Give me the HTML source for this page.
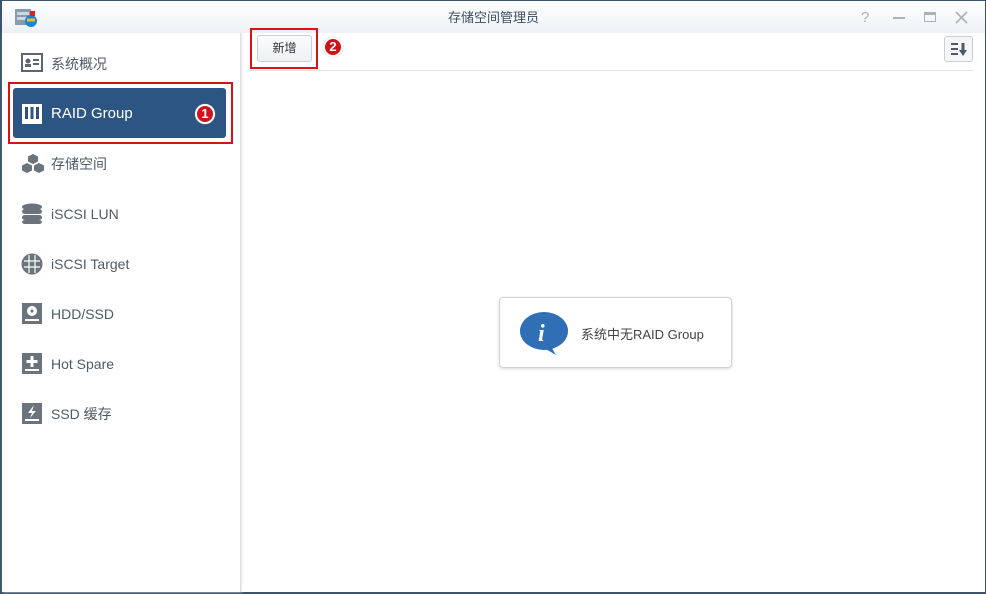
<!DOCTYPE html>
<html><head><meta charset="utf-8"><style>
*{margin:0;padding:0;box-sizing:border-box}
body{width:986px;height:594px;overflow:hidden;font-family:"Liberation Sans","Noto Sans CJK SC",sans-serif;background:#fff;position:relative}
.win{position:absolute;left:0;top:0;width:986px;height:594px;border:1px solid #3a5470;border-left-width:2px;border-bottom-width:2px;background:#fff}
.title{position:absolute;left:0;top:0;width:100%;height:32px;background:linear-gradient(#fff,#eef1f4);text-align:center;font-size:13px;color:#3b4d63;line-height:34px}
.side{position:absolute;left:0;top:32px;width:239px;bottom:0;background:#fff;border-right:1px solid #dcdfe3;box-shadow:1px 0 2px #e6e6e6}
.item{position:absolute;left:18px;font-size:14px;color:#505a64;height:24px;line-height:24px;padding-left:31px}
.item svg{position:absolute;left:1px;top:1px}
.sel{position:absolute;left:11px;top:55px;width:213px;height:50px;background:#2d5583;border-radius:3px}
.red{position:absolute;border:2px solid #d9121a}
.badge{position:absolute;width:20px;height:20px;border-radius:50%;background:#d0131a;border:2px solid #fff;box-shadow:0 0 1px #999;color:#fff;font-size:13px;font-weight:bold;text-align:center;line-height:16px}
</style></head><body>
<div class="win">
<div class="title">存储空间管理员
<svg style="position:absolute;left:12px;top:6px" width="24" height="22"><rect x="1" y="2" width="16" height="16" fill="#8a9bb0"/><rect x="3" y="5" width="12" height="3" fill="#cfd8e2"/><rect x="3" y="10" width="12" height="3" fill="#cfd8e2"/><circle cx="17" cy="14" r="6" fill="#1c84d6"/><path d="M13 13h8" stroke="#f0c020" stroke-width="3"/><rect x="16" y="4" width="5" height="5" fill="#d22"/></svg>
<span style="position:absolute;left:859px;top:0;color:#aab2ba;font-size:15px">?</span>
<span style="position:absolute;left:891px;top:16px;width:12px;height:1.5px;background:#aab2ba"></span>
<span style="position:absolute;left:922px;top:11px;width:12px;height:10px;border:1.5px solid #aab2ba;border-top-width:3px"></span>
<svg style="position:absolute;left:953px;top:10px" width="13" height="13"><path d="M1 1L12 12M12 1L1 12" stroke="#aab2ba" stroke-width="1.6"/></svg>
</div>
<div class="side">
<div class="sel"></div>
<div class="item" style="top:19px"><svg width="22" height="20"><rect x="1" y="1" width="20" height="17" fill="none" stroke="#5d6670" stroke-width="2"/><circle cx="7" cy="8" r="2.5" fill="#5d6670"/><rect x="4" y="11" width="6" height="3" fill="#5d6670"/><rect x="12" y="6" width="6" height="2" fill="#5d6670"/><rect x="12" y="10" width="6" height="2" fill="#5d6670"/></svg>系统概况</div>
<div class="item" style="top:69px;color:#fff;font-size:15px"><svg width="22" height="22"><rect x="1" y="1" width="20" height="20" fill="#fff"/><rect x="4" y="4" width="3" height="12" fill="#2d5583"/><rect x="9.5" y="4" width="3" height="12" fill="#2d5583"/><rect x="15" y="4" width="3" height="12" fill="#2d5583"/></svg>RAID Group</div>
<div class="item" style="top:119px"><svg width="24" height="22"><path d="M12 1l5 2.5v5l-5 2.5-5-2.5v-5zM6 10l5 2.5v5l-5 2.5-5-2.5v-5zM18 10l5 2.5v5l-5 2.5-5-2.5v-5z" fill="#6b737c"/></svg>存储空间</div>
<div class="item" style="top:169px"><svg width="22" height="22"><ellipse cx="11" cy="4" rx="10" ry="3.5" fill="#6b737c"/><rect x="1" y="6" width="20" height="5" rx="3" fill="#6b737c"/><rect x="1" y="12" width="20" height="5" rx="3" fill="#6b737c"/><rect x="1" y="17" width="20" height="4" rx="3" fill="#6b737c"/></svg>iSCSI LUN</div>
<div class="item" style="top:219px"><svg width="22" height="22"><circle cx="11" cy="11" r="10.5" fill="#6b737c"/><path d="M3 8h16M3 14h16M8 2v18M14 2v18" stroke="#fff" stroke-width="1.2"/></svg>iSCSI Target</div>
<div class="item" style="top:269px"><svg width="22" height="22"><rect x="1" y="0" width="20" height="21" fill="#6b737c"/><circle cx="11" cy="8" r="5" fill="#fff"/><circle cx="11" cy="8" r="1.5" fill="#6b737c"/><rect x="4" y="16" width="14" height="2" fill="#fff"/></svg>HDD/SSD</div>
<div class="item" style="top:319px"><svg width="22" height="22"><rect x="1" y="0" width="20" height="21" fill="#6b737c"/><path d="M11 3v11M5.5 8.5h11" stroke="#fff" stroke-width="3"/><rect x="4" y="16" width="14" height="2" fill="#fff"/></svg>Hot Spare</div>
<div class="item" style="top:369px"><svg width="22" height="22"><rect x="1" y="0" width="20" height="21" fill="#6b737c"/><path d="M13 2L7 10h4l-2 5 6-7h-4z" fill="#fff"/><rect x="4" y="16" width="14" height="2" fill="#fff"/></svg>SSD 缓存</div>
</div>
<div class="red" style="left:6px;top:81px;width:225px;height:62px"></div>
<div class="badge" style="left:193px;top:103px">1</div>
<div style="position:absolute;left:255px;top:34px;width:55px;height:27px;border:1px solid #c9cfd6;border-radius:3px;background:linear-gradient(#fafbfc,#eef1f4);font-size:12px;color:#333;text-align:center;line-height:25px">新增</div>
<div class="red" style="left:248px;top:27px;width:68px;height:41px"></div>
<div class="badge" style="left:321px;top:36px">2</div>
<div style="position:absolute;left:942px;top:35px;width:29px;height:26px;border:1px solid #c9cfd6;border-radius:3px;background:#f4f6f8"><svg style="position:absolute;left:6px;top:5px" width="16" height="15"><path d="M0 2h7M0 7h7M0 12h7" stroke="#4f5a66" stroke-width="2"/><path d="M12 1v8" stroke="#4f5a66" stroke-width="3"/><path d="M8 8h8l-4 6z" fill="#4f5a66"/></svg></div>
<div style="position:absolute;left:247px;top:69px;width:724px;height:1px;background:#dfe2e6"></div>
<div style="position:absolute;left:497px;top:296px;width:233px;height:71px;border:1px solid #cfd3d8;border-radius:4px;background:#fff;box-shadow:0 1px 3px rgba(0,0,0,.15)">
<svg style="position:absolute;left:20px;top:13px" width="50" height="46"><ellipse cx="24" cy="20" rx="24" ry="19" fill="#2f6fb5"/><path d="M30 34l6 10-12-7z" fill="#2f6fb5"/><text x="18" y="30" font-family="Liberation Serif,serif" font-style="italic" font-weight="bold" font-size="24" fill="#fff">i</text></svg>
<span style="position:absolute;left:81px;top:26px;font-size:13px;color:#444">系统中无RAID Group</span>
</div>
</div>
</body></html>
